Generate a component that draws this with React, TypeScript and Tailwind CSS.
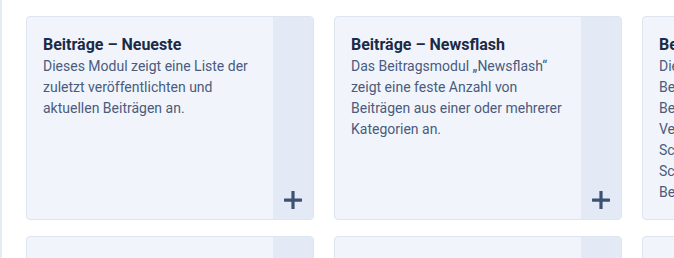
import React from "react";

type Mod = { title: string; desc: string };

const modules: Mod[] = [
  {
    title: "Beiträge – Neueste",
    desc: "Dieses Modul zeigt eine Liste der zuletzt veröffentlichten und aktuellen Beiträgen an.",
  },
  {
    title: "Beiträge – Newsflash",
    desc: "Das Beitragsmodul „Newsflash“ zeigt eine feste Anzahl von Beiträgen aus einer oder mehrerer Kategorien an.",
  },
  {
    title: "Beiträge – Verwandte",
    desc: "Dieses Modul zeigt andere\nBeiträge an, die mit dem\nBeitrag in Beziehung stehen.\nVerbindungen entstehen über\nSchlüsselwörter. Alle\nSchlüsselwörter des aktuellen\nBeitrags werden verglichen.",
  },
  {
    title: "Benutzer – Wer ist online",
    desc: "Dieses Modul zeigt die Anzahl der Gäste und Benutzer an, die gerade online sind.",
  },
  {
    title: "Eigene Module",
    desc: "Dieses Modul erlaubt es, eigene Inhalte mit einem Editor zu erstellen.",
  },
  {
    title: "Fußzeile",
    desc: "Dieses Modul zeigt die Copyright-Informationen der Website an.",
  },
];

const PlusIcon = () => (
  <svg width="18" height="18" viewBox="0 0 18 18" className="text-[#3d5174]">
    <rect x="0" y="7.5" width="18" height="3.2" rx="0.6" fill="currentColor" />
    <rect x="7.4" y="0" width="3.2" height="18" rx="0.6" fill="currentColor" />
  </svg>
);

const ModuleCard = ({ mod }: { mod: Mod }) => (
  <div className="flex h-[204px] overflow-hidden rounded-[4px] border border-[#dde5f0] bg-[#f1f5fb]">
    <div className="flex-1 pl-4 pr-3 pt-4">
      <h3 className="text-[16px] leading-[23px] font-bold text-[#1b2a48]">{mod.title}</h3>
      <p className="whitespace-pre-line text-[14px] leading-[21px] text-[#4a5b7d]">{mod.desc}</p>
    </div>
    <div className="flex w-10 shrink-0 items-end justify-center bg-[#e3eaf5] pb-[10px]">
      <PlusIcon />
    </div>
  </div>
);

export default function App() {
  return (
    <div
      className="h-[258px] w-[674px] overflow-hidden border-l-2 border-[#e5ebf4] bg-white pl-6 pt-4"
      style={{ fontFamily: "Roboto, 'Noto Sans', sans-serif" }}
    >
      <div className="grid grid-cols-[repeat(3,288px)] gap-x-5 gap-y-4">
        {modules.map((m) => (
          <ModuleCard key={m.title} mod={m} />
        ))}
      </div>
    </div>
  );
}
